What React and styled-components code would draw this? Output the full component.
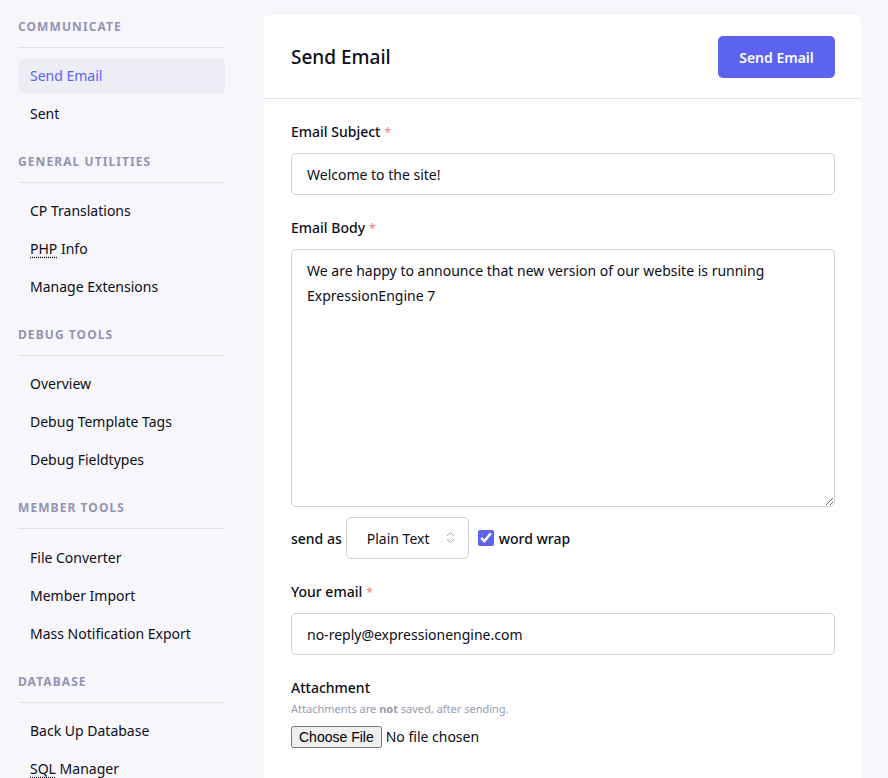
import React from "react";
import styled, { createGlobalStyle } from "styled-components";
import { ChevronsUpDown } from "lucide-react";

const GlobalStyle = createGlobalStyle`
  body {
    margin: 0;
    background: #f7f7fb;
    font-family: "Noto Sans", "Open Sans", sans-serif;
    color: #0d0d19;
  }
`;

const Page = styled.div`
  display: flex;
  align-items: flex-start;
  min-height: 778px;
  overflow: hidden;
`;

const Sidebar = styled.nav`
  width: 207px;
  flex-shrink: 0;
  padding: 17.5px 0 0 18px;
`;

const Section = styled.div`
  margin-bottom: 21px;
`;

const SectionTitle = styled.div`
  font-size: 12px;
  line-height: 18px;
  font-weight: 700;
  letter-spacing: 0.09em;
  text-transform: uppercase;
  color: #9394b2;
  padding-bottom: 11px;
  border-bottom: 1px solid #e0e0ec;
  margin-bottom: 10.3px;
`;

const NavList = styled.div`
  display: flex;
  flex-direction: column;
  gap: 2px;
`;

const NavItem = styled.a`
  display: block;
  height: 36px;
  line-height: 36px;
  padding: 0 12px;
  border-radius: 6px;
  font-size: 14px;
  text-decoration: none;
  color: ${(props) => (props.active ? "#5d63f1" : "#0d0d19")};
  background: ${(props) => (props.active ? "#ededf6" : "transparent")};
`;

const Abbr = styled.abbr`
  text-decoration: underline dotted;
  text-underline-offset: 3px;
`;

const Main = styled.main`
  margin-left: 39px;
  padding-top: 15px;
`;

const Card = styled.div`
  width: 597px;
  min-height: 800px;
  background: #fff;
  border-radius: 6px;
`;

const CardHeader = styled.div`
  display: flex;
  align-items: center;
  justify-content: space-between;
  padding: 21px 26px 20px 27px;
  border-bottom: 1px solid #e3e3ee;
`;

const Title = styled.h1`
  margin: 0;
  font-size: 19px;
  font-weight: 500;
`;

const PrimaryButton = styled.button`
  height: 42px;
  width: 117px;
  border: none;
  border-radius: 5px;
  background: #5d63f1;
  color: #fff;
  font-family: inherit;
  font-size: 14px;
  font-weight: 600;
`;

const CardBody = styled.div`
  padding: 23px 26px 0 27px;
  display: flex;
  flex-direction: column;
`;

const Field = styled.div`
  margin-bottom: 23px;
`;

const Label = styled.div`
  font-size: 14px;
  line-height: 20px;
  font-weight: 500;
  margin-bottom: ${(props) => (props.tight ? "0" : "10px")};
`;

const Required = styled.span`
  color: #f47a7a;
  font-size: 12px;
  font-weight: 400;
  margin-left: 4px;
`;

const TextInput = styled.input`
  box-sizing: border-box;
  width: 100%;
  height: 42px;
  border: 1px solid #cfcfe0;
  border-radius: 5px;
  padding: 0 15px;
  font-family: inherit;
  font-size: 14px;
  color: #0d0d19;
  outline: none;
`;

const TextArea = styled.textarea`
  box-sizing: border-box;
  display: block;
  width: 100%;
  height: 258px;
  border: 1px solid #cfcfe0;
  border-radius: 5px;
  padding: 8px 15px;
  font-family: inherit;
  font-size: 14px;
  line-height: 25px;
  color: #0d0d19;
  outline: none;
  resize: vertical;
`;

const OptionsRow = styled.div`
  display: flex;
  align-items: center;
  margin-top: 10px;
  font-size: 14px;
  font-weight: 500;
`;

const SelectWrap = styled.div`
  position: relative;
  margin-left: 4px;
`;

const Select = styled.select`
  appearance: none;
  width: 123px;
  height: 42px;
  border: 1px solid #cfcfe0;
  border-radius: 5px;
  background: #fff;
  padding: 0 0 0 20px;
  font-family: inherit;
  font-size: 14px;
  color: #0d0d19;
  outline: none;
`;

const SelectIcon = styled.span`
  position: absolute;
  right: 11px;
  top: 13px;
  color: #a3a4bd;
  pointer-events: none;
  display: flex;
`;

const CheckLabel = styled.label`
  display: flex;
  align-items: center;
  gap: 5px;
  margin-left: 9px;
`;

const Checkbox = styled.input`
  width: 16px;
  height: 16px;
  margin: 0;
  accent-color: #5d63f1;
`;

const Hint = styled.div`
  font-size: 11px;
  line-height: 16px;
  color: #9a9bb5;
  margin: 3px 0 8px;
`;

const FileInput = styled.input`
  font-family: "Noto Sans", sans-serif;
  font-size: 14px;
  color: #0d0d19;
`;

const sections = [
  { title: "Communicate", items: ["Send Email", "Sent"] },
  { title: "General Utilities", items: ["CP Translations", "PHP Info", "Manage Extensions"] },
  { title: "Debug Tools", items: ["Overview", "Debug Template Tags", "Debug Fieldtypes"] },
  { title: "Member Tools", items: ["File Converter", "Member Import", "Mass Notification Export"] },
  { title: "Database", items: ["Back Up Database", "SQL Manager"] },
];

const renderItem = (item) => {
  if (item === "PHP Info") return <><Abbr>PHP</Abbr> Info</>;
  if (item === "SQL Manager") return <><Abbr>SQL</Abbr> Manager</>;
  return item;
};

const App = () => {
  return (
    <>
      <GlobalStyle />
      <Page>
        <Sidebar>
          {sections.map((section) => (
            <Section key={section.title}>
              <SectionTitle>{section.title}</SectionTitle>
              <NavList>
                {section.items.map((item) => (
                  <NavItem key={item} active={item === "Send Email"}>
                    {renderItem(item)}
                  </NavItem>
                ))}
              </NavList>
            </Section>
          ))}
        </Sidebar>
        <Main>
          <Card>
            <CardHeader>
              <Title>Send Email</Title>
              <PrimaryButton>Send Email</PrimaryButton>
            </CardHeader>
            <CardBody>
              <Field>
                <Label>Email Subject<Required>*</Required></Label>
                <TextInput defaultValue="Welcome to the site!" />
              </Field>
              <Field>
                <Label>Email Body<Required>*</Required></Label>
                <TextArea defaultValue={"We are happy to announce that new version of our website is running ExpressionEngine 7"} />
                <OptionsRow>
                  send as
                  <SelectWrap>
                    <Select defaultValue="text">
                      <option value="text">Plain Text</option>
                      <option value="html">HTML</option>
                    </Select>
                    <SelectIcon><ChevronsUpDown size={15} strokeWidth={1.6} /></SelectIcon>
                  </SelectWrap>
                  <CheckLabel>
                    <Checkbox type="checkbox" defaultChecked />
                    word wrap
                  </CheckLabel>
                </OptionsRow>
              </Field>
              <Field>
                <Label>Your email<Required>*</Required></Label>
                <TextInput defaultValue="no-reply@expressionengine.com" />
              </Field>
              <Field>
                <Label tight>Attachment</Label>
                <Hint>Attachments are <b>not</b> saved, after sending.</Hint>
                <FileInput type="file" />
              </Field>
            </CardBody>
          </Card>
        </Main>
      </Page>
    </>
  );
};

export default App;
